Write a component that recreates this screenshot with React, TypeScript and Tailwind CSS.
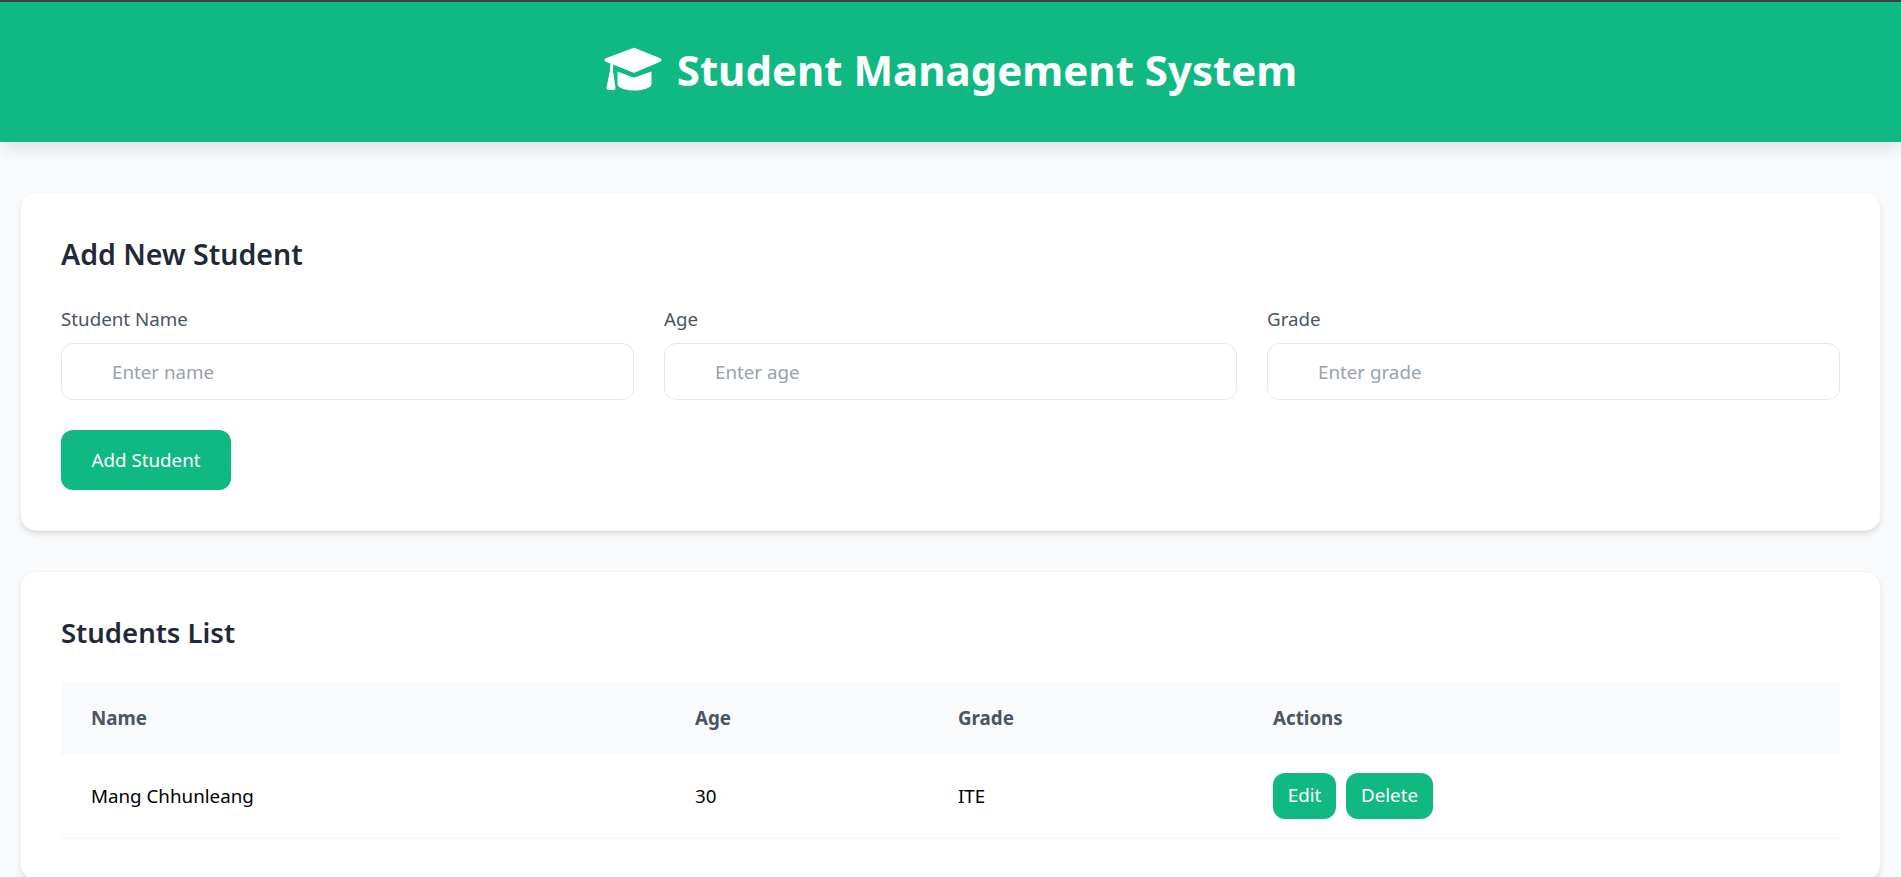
const fields = [
  { label: 'Student Name', placeholder: 'Enter name' },
  { label: 'Age', placeholder: 'Enter age' },
  { label: 'Grade', placeholder: 'Enter grade' },
];

const cardClass =
  'bg-white rounded-2xl border border-gray-100 p-10 shadow-[0_4px_6px_-1px_rgba(0,0,0,0.1),0_2px_4px_-2px_rgba(0,0,0,0.1)]';

function CapIcon() {
  return (
    <svg viewBox="0 0 58 44" className="w-[58px] h-[44px] mb-[6px] fill-current">
      {/* mortarboard */}
      <path
        d="M30 1.5 L56 12 Q57.5 13 56 14 L30 25 L2 14 Q0.5 13 2 12 Z"
        stroke="currentColor"
        strokeWidth="1.5"
        strokeLinejoin="round"
      />
      {/* cap body */}
      <path d="M13.5 24.5 L28 30 Q30 30.8 32 30 L47.5 24.5 L47.5 37 C47.5 41 39 43.5 30.5 43.5 C22 43.5 13.5 41 13.5 37 Z" />
      {/* tassel */}
      <path d="M6.5 15 L9 16 L8.8 25 Q10 26.5 9.6 28 L11.5 41 Q11.5 43 9.5 43 L4.5 43 Q2.5 43 2.5 41 L5 28 Q4.6 26.5 6 25 Z" />
    </svg>
  );
}

export default function App() {
  return (
    <div className="h-screen overflow-hidden bg-[#f9fafb] font-['Noto_Sans',sans-serif] text-black">
      {/* Header */}
      <header className="h-[142px] border-t-2 border-[#3a3f3f] bg-[#10b981] flex items-center justify-center gap-[15px] text-white shadow-[0_10px_15px_-3px_rgba(0,0,0,0.1)]">
        <CapIcon />
        <h1 className="text-[42px] leading-none font-bold pb-1">Student Management System</h1>
      </header>

      <main className="px-5 pt-[50px] flex flex-col gap-[40px]">
        {/* Add form */}
        <section className={cardClass}>
          <h2 className="text-[28.5px] leading-[42px] font-semibold text-[#1f2937] mb-[31px]">Add New Student</h2>
          <div className="grid grid-cols-3 gap-[30px] mb-[30px]">
            {fields.map((field) => (
              <div key={field.label}>
                <label className="block text-[18.75px] leading-[25px] text-[#4b5563] mb-[12px]">{field.label}</label>
                <input
                  placeholder={field.placeholder}
                  className="w-full h-[57px] pl-[50px] pr-4 rounded-xl border border-gray-200 bg-white text-[18.75px] placeholder:text-gray-400"
                />
              </div>
            ))}
          </div>
          <button className="h-[60px] w-[170px] rounded-xl bg-[#10b981] text-white text-[18.75px]">
            Add Student
          </button>
        </section>

        {/* Students table */}
        <section className={cardClass}>
          <h2 className="text-[27.5px] leading-[42px] font-semibold text-[#1f2937] mb-[28px]">Students List</h2>
          <table className="w-full table-fixed border-collapse text-[18.75px]">
            <colgroup>
              <col className="w-[604px]" />
              <col className="w-[263px]" />
              <col className="w-[315px]" />
              <col />
            </colgroup>
            <thead>
              <tr className="h-[71px] bg-[#f9fafb] border-b border-gray-100 text-[#4b5563] text-left">
                <th className="px-[30px] pt-[2px] font-bold">Name</th>
                <th className="px-[30px] pt-[2px] font-bold">Age</th>
                <th className="px-[30px] pt-[2px] font-bold">Grade</th>
                <th className="px-[30px] pt-[2px] font-bold">Actions</th>
              </tr>
            </thead>
            <tbody>
              <tr className="h-[85px] border-b border-gray-100">
                <td className="px-[30px] pt-[2px]">Mang Chhunleang</td>
                <td className="px-[30px] pt-[2px]">30</td>
                <td className="px-[30px] pt-[2px]">ITE</td>
                <td className="px-[30px]">
                  <div className="flex gap-[10px]">
                    <button className="h-[46px] w-[63px] rounded-xl bg-[#10b981] text-white">Edit</button>
                    <button className="h-[46px] w-[87px] rounded-xl bg-[#10b981] text-white">Delete</button>
                  </div>
                </td>
              </tr>
            </tbody>
          </table>
        </section>
      </main>
    </div>
  );
}
